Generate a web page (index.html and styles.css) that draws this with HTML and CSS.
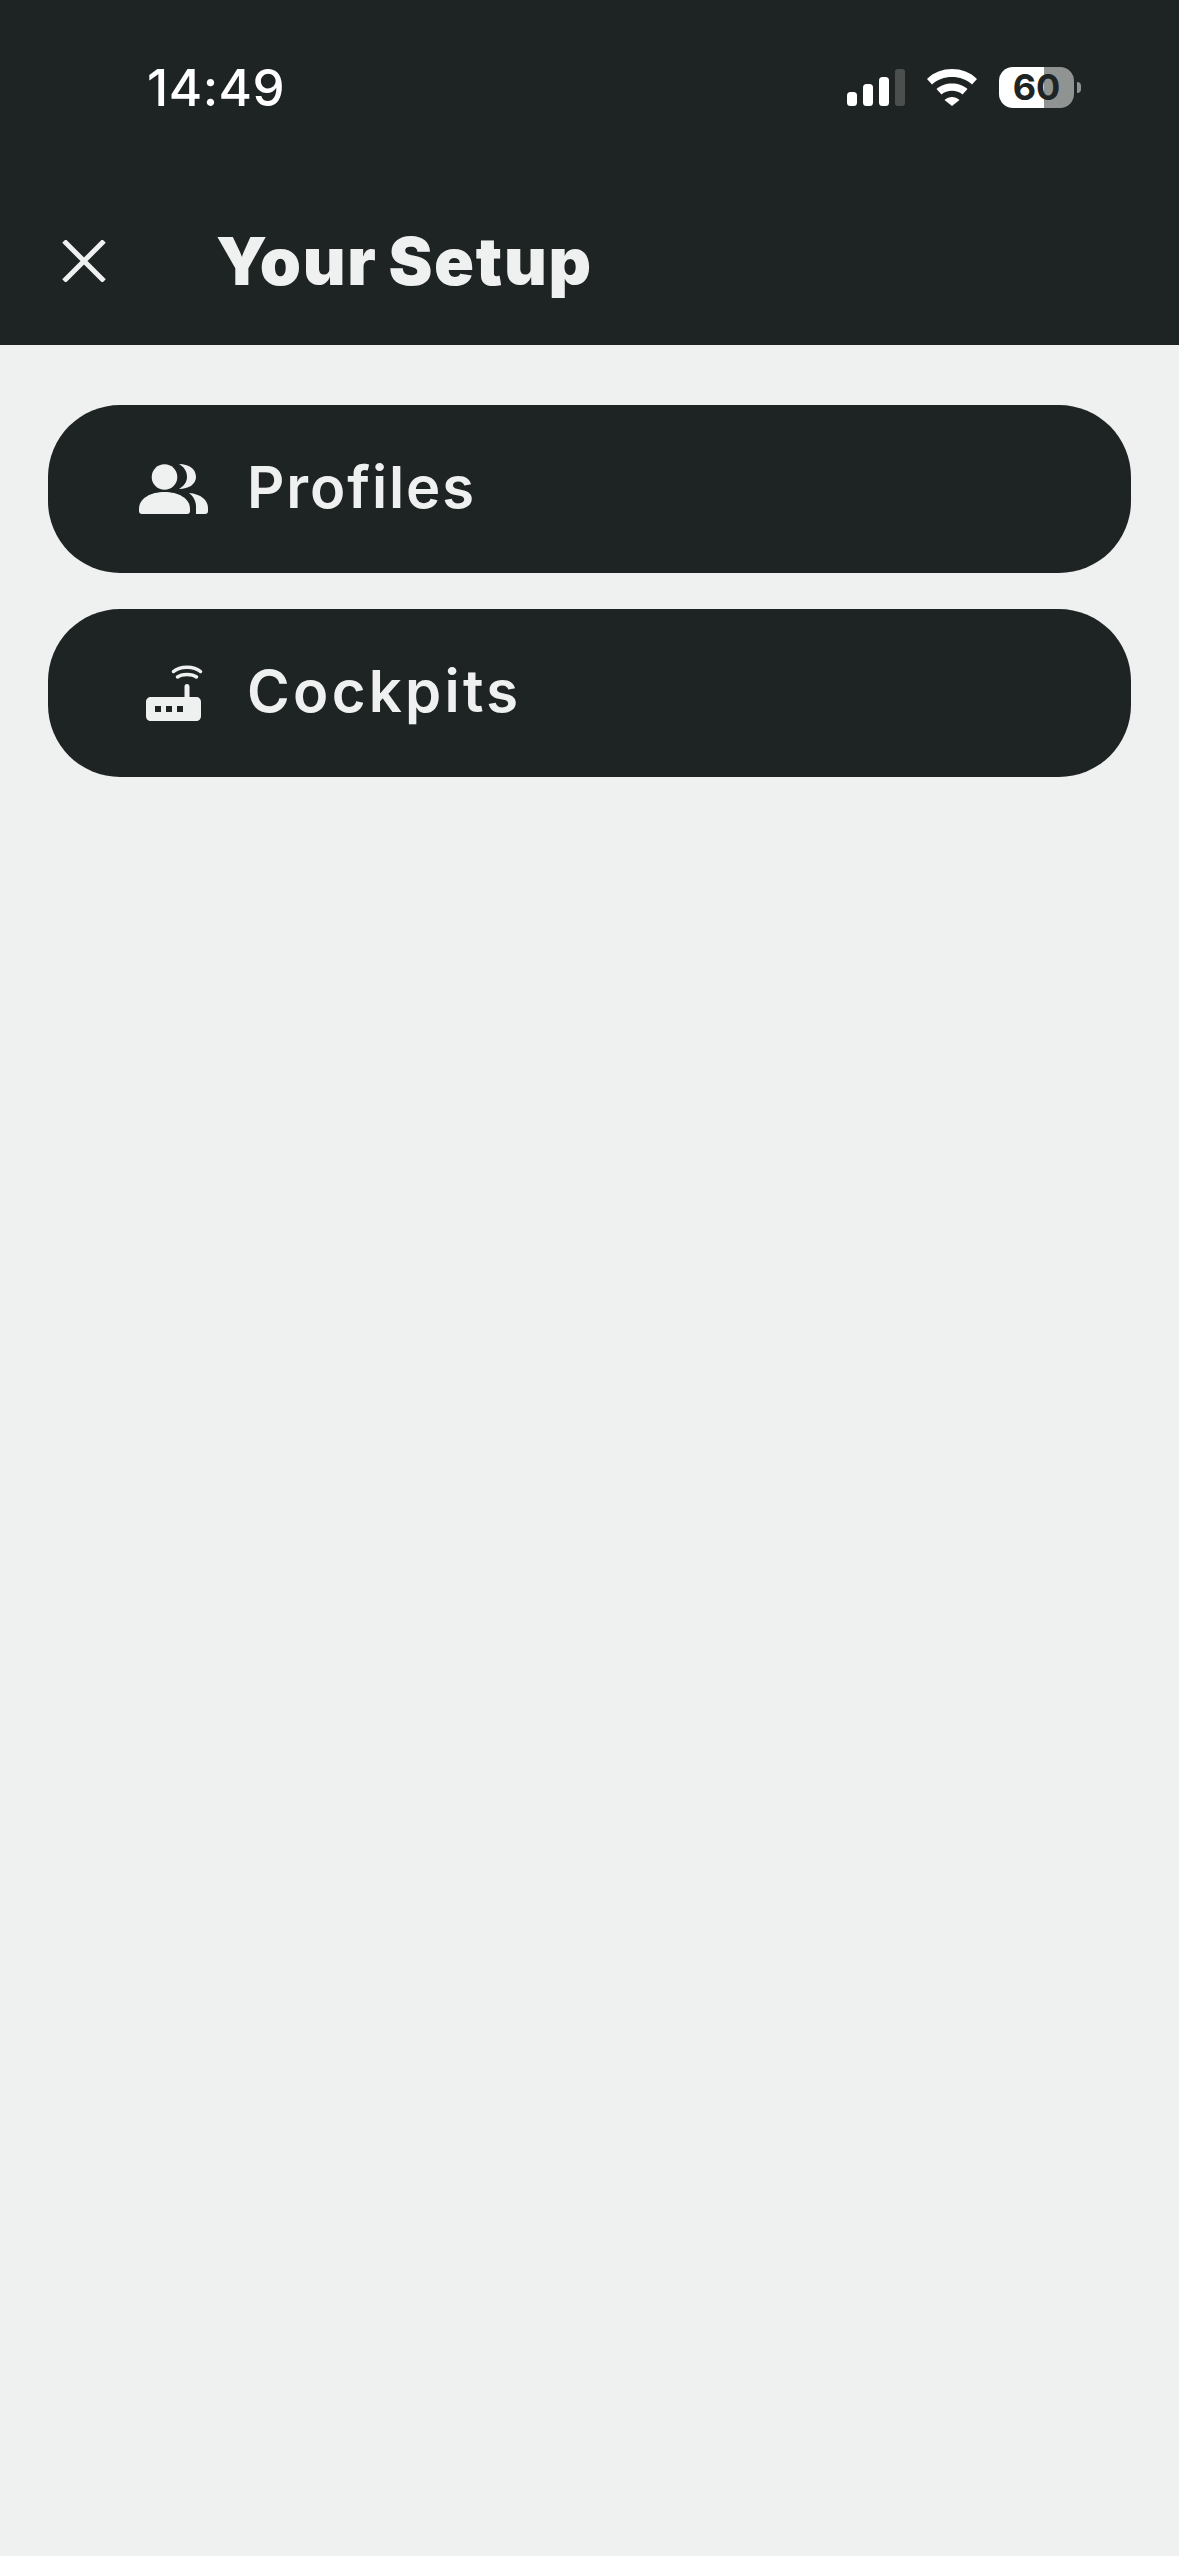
FILE: index.html
```html
<!DOCTYPE html>
<html lang="en">
<head>
  <meta charset="UTF-8" />
  <title>Your Setup</title>
  <link rel="stylesheet" href="styles.css">
</head>
<body>

  <header class="top">
    <div class="status">
      <span class="hora">14:49</span>
      <div class="status-icons">
        <svg class="signal" width="58" height="37" viewBox="0 0 58 37">
          <rect x="0" y="23" width="10" height="14" rx="3.5" fill="#fff" />
          <rect x="16" y="15" width="10" height="22" rx="3.5" fill="#fff" />
          <rect x="32" y="8" width="10" height="29" rx="3.5" fill="#fff" />
          <rect x="48" y="0" width="10" height="37" rx="3" fill="#4b504f" />
        </svg>
        <svg class="wifi" width="50" height="37" viewBox="0 0 50 37">
          <path fill="#fff" d="M0 10C13-3.3 37-3.3 50 10L45 15.5C35 5.5 15 5.5 5 15.5Z" />
          <path fill="#fff" d="M9.500 20C17 12.500 33 12.500 40.500 20L35.500 25.500C30 20.500 20 20.500 14.500 25.500Z" />
          <path fill="#fff" d="M17.500 31C22 27 28 27 32.500 31L25 37Z" />
        </svg>
        <div class="bateria">
          <div class="bateria-cuerpo">60</div>
          <div class="bateria-punta"></div>
        </div>
      </div>
    </div>

    <div class="barra">
      <svg class="cerrar" width="44" height="42" viewBox="0 0 44 42">
        <path d="M2 1L42 41M42 1L2 41" stroke="#eff1f0" stroke-width="5" fill="none" />
      </svg>
      <h1>Your Setup</h1>
    </div>
  </header>

  <main class="lista">
    <a class="opcion">
      <svg class="icono" width="70" height="60" viewBox="139 459 70 60">
        <circle cx="164.500" cy="477" r="12.800" fill="#eff1f0" />
        <path fill="#eff1f0" d="M139 509C139 498 151 492 164.500 492C178 492 190 498 190 509V511C190 513 189 514 187 514H142C140 514 139 513 139 511Z" />
        <path fill="#eff1f0" d="M179 464C189 464 196 469 196 477C196 484 189 489 179 489C184 486 187 482 187 477C187 471 184 467 179 464Z" />
        <path fill="#eff1f0" d="M189 493C201 494 208 500 208 508V511C208 513 207 514 205 514H196V506C196 501 193 496 189 493Z" />
      </svg>
      <span class="perfiles">Profiles</span>
    </a>
    <a class="opcion">
      <svg class="icono" width="70" height="60" viewBox="139 663 70 60">
        <path fill="#eff1f0" fill-rule="evenodd" d="M151 697H184.500V686.500C184.500 683.200 189.500 683.200 189.500 686.500V697H196C199 697 201 699 201 702V716C201 719 199 721 196 721H151C148 721 146 719 146 716V702C146 699 148 697 151 697ZM155 706V712H161V706ZM166 706V712H172V706ZM177 706V712H183V706Z" />
        <path d="M173.500 671.500C180 665.800 194 665.800 200.500 671.500M177.500 677C182 673.500 192 673.500 196.500 677" stroke="#eff1f0" stroke-width="3.500" fill="none" stroke-linecap="round" />
      </svg>
      <span class="cabinas">Cockpits</span>
    </a>
  </main>

</body>
</html>
```

FILE: styles.css
```css
body {
  margin: 0;
  height: 2556px;
  overflow: hidden;
  background: #eff1f0;
  font-family: 'Inter', 'Liberation Sans', sans-serif;
  color: #eff1f0;
}

.top {
  background: #1e2423;
}

.status {
  height: 174px;
  display: flex;
  align-items: center;
  justify-content: space-between;
  padding: 0 98px 0 147px;
}

.hora {
  font-size: 51px;
  font-weight: 500;
  letter-spacing: 0.5px;
  color: #fff;
}

.status-icons {
  display: flex;
  align-items: center;
  gap: 22px;
}

.bateria {
  display: flex;
  align-items: center;
  gap: 3px;
}

.bateria-cuerpo {
  width: 75px;
  height: 41px;
  border-radius: 14px;
  background: linear-gradient(90deg, #fff 0, #fff 60%, #8f9392 60%, #8f9392 100%);
  color: #1e2423;
  font-size: 36px;
  font-weight: 700;
  line-height: 41px;
  text-align: center;
}

.bateria-punta {
  width: 4px;
  height: 11px;
  border-radius: 0 5px 5px 0;
  background: #8f9392;
}

.barra {
  height: 171px;
  display: flex;
  align-items: center;
  padding-left: 62px;
  gap: 110px;
}

.cerrar {
  margin-top: 2px;
}

.barra h1 {
  margin: 2px 0 0;
  font-size: 66px;
  font-weight: 900;
  letter-spacing: 1.7px;
  word-spacing: -4px;
  color: #eff1f0;
}

.lista {
  display: flex;
  flex-direction: column;
  gap: 36px;
  padding: 60px 48px 0;
}

.opcion {
  height: 168px;
  display: flex;
  align-items: center;
  gap: 38px;
  padding-left: 91px;
  border-radius: 72px;
  background: #1e2423;
  font-size: 58px;
  font-weight: 600;
}

.opcion span {
  padding-bottom: 4px;
}

.perfiles {
  letter-spacing: 1.9px;
}

.cabinas {
  letter-spacing: 3.3px;
}
```
